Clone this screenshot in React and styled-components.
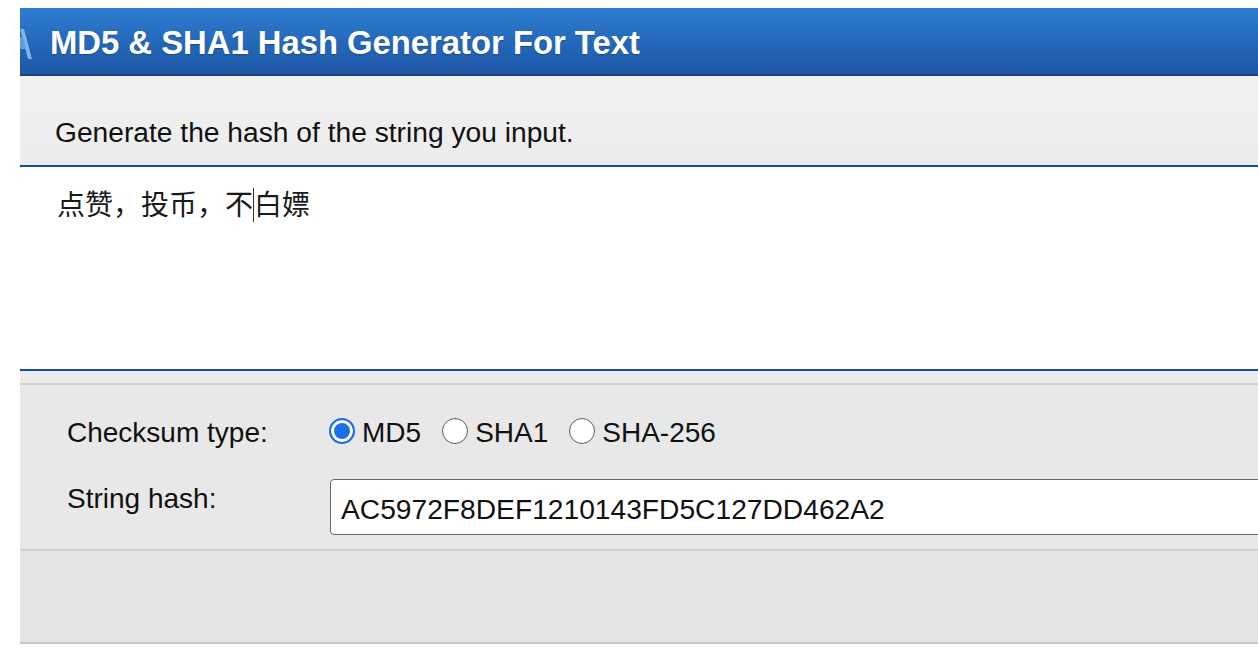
import React from 'react';
import styled, { createGlobalStyle } from 'styled-components';

const GlobalStyle = createGlobalStyle`
  html, body {
    margin: 0;
    padding: 0;
    background: #fff;
    overflow: hidden;
    font-family: "Liberation Sans", Arial, "Noto Sans CJK SC", sans-serif;
  }
`;

const Page = styled.div`
  padding-top: 8px;
  margin-left: 20px;
  width: calc(100vw - 20px);
`;

const Header = styled.div`
  height: 68px;
  box-sizing: border-box;
  display: flex;
  align-items: center;
  gap: 18px;
  padding-top: 3px;
  background: linear-gradient(to bottom, #2e7dd1 0%, #2467b8 55%, #1f58a6 100%);
  border-bottom: 2px solid #17437f;
`;

const Title = styled.h1`
  margin: 0;
  font-size: 32.8px;
  font-weight: bold;
  color: #fff;
  text-shadow: 0 1px 1px rgba(0, 0, 0, 0.25);
`;

const Intro = styled.div`
  height: 91px;
  box-sizing: border-box;
  display: flex;
  align-items: flex-end;
  padding: 0 0 17px 35px;
  background: linear-gradient(to bottom, #f1f1f1, #ececec);
  font-size: 28.2px;
  line-height: 32px;
  color: #111;
  border-bottom: 2px solid #1c48a0;
`;

const Editor = styled.div`
  height: 204px;
  box-sizing: border-box;
  padding: 21px 0 0 37px;
  background: #fff;
  font-size: 28px;
  line-height: 32px;
  color: #1a1a1a;
  border-bottom: 2px solid #1c48a0;
`;

const Caret = styled.span`
  display: inline-block;
  width: 0;
  height: 34px;
  border-left: 1px solid #333;
  vertical-align: -7px;
`;

const Gap = styled.div`
  height: ${p => p.$h}px;
  background: ${p => p.$bg};
  border-bottom: 2px solid ${p => p.$line};
`;

const Form = styled.div`
  display: grid;
  grid-template-columns: 263px 1fr;
  row-gap: 30px;
  padding: 32px 0 14px 47px;
  background: #e8e8e8;
  border-bottom: 2px solid #d0d0d0;
`;

const Label = styled.div`
  font-size: 28px;
  line-height: 32px;
  color: #111;
  padding-top: ${p => p.$top || 0}px;
`;

const Radios = styled.div`
  display: flex;
  align-items: center;
  height: 32px;
  margin-left: -1px;
`;

const Option = styled.label`
  display: flex;
  align-items: center;
  gap: 7px;
  margin-right: 21px;
  font-size: 28px;
  line-height: 32px;
  color: #111;
`;

const Dot = styled.span`
  width: 26px;
  height: 26px;
  box-sizing: border-box;
  border-radius: 50%;
  margin-top: -4px;
  background: ${p => (p.$on ? '#1a6fe6' : '#fff')};
  border: ${p => (p.$on ? '2px solid #1a6fe6' : '1.5px solid #5e5e5e')};
  box-shadow: ${p => (p.$on ? 'inset 0 0 0 3px #fff' : 'none')};
`;

const HashBox = styled.div`
  width: 1100px;
  height: 56px;
  box-sizing: border-box;
  display: flex;
  align-items: center;
  padding: 4px 0 0 10px;
  background: #fff;
  border: 1.5px solid #6a6a6a;
  border-radius: 4px;
  font-size: 28.2px;
  color: #111;
`;

const Logo = () => (
  <svg width="12" height="36" viewBox="0 0 12 36" style={{ marginTop: 8 }}>
    <polygon points="0,0 4,0 12,30 8,30" fill="#7db6ea" />
    <polygon points="0,8 3,8 6,20 0,20" fill="#5d9fe0" />
  </svg>
);

const options = ['MD5', 'SHA1', 'SHA-256'];

export default function App() {
  return (
    <>
      <GlobalStyle />
      <Page>
        <Header>
          <Logo />
          <Title>MD5 &amp; SHA1 Hash Generator For Text</Title>
        </Header>
        <Intro>Generate the hash of the string you input.</Intro>
        <Editor>
          点赞，投币，不<Caret />白嫖
        </Editor>
        <Gap $h={12} $bg="#ececec" $line="#d2d2d2" />
        <Form>
          <Label>Checksum type:</Label>
          <Radios>
            {options.map((o, i) => (
              <Option key={o}>
                <Dot $on={i === 0} />
                {o}
              </Option>
            ))}
          </Radios>
          <Label $top={4}>String hash:</Label>
          <HashBox>AC5972F8DEF1210143FD5C127DD462A2</HashBox>
        </Form>
        <Gap $h={91} $bg="#e4e4e4" $line="#c8c8c8" />
      </Page>
    </>
  );
}
